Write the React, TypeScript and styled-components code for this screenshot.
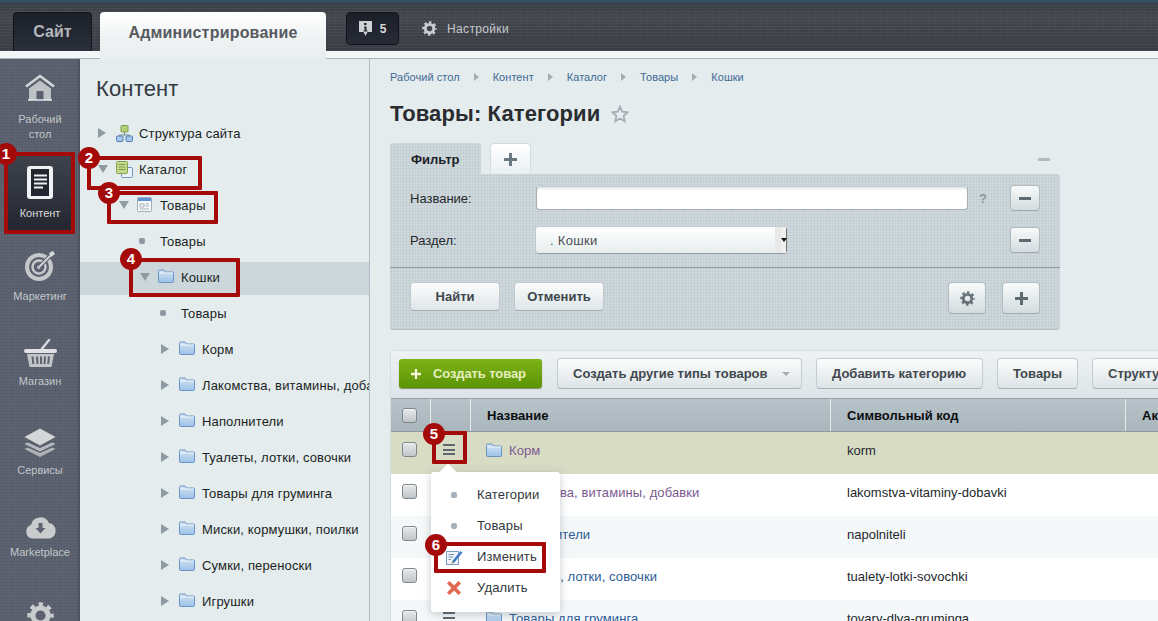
import React from "react";
import styled, { createGlobalStyle } from "styled-components";

const Global = createGlobalStyle`
  html, body { margin: 0; padding: 0; width: 1158px; height: 621px; overflow: hidden; background: #e4ecee; }
  #root { width: 1158px; height: 621px; }
  * { box-sizing: border-box; }
`;

const dots = (c: string) => `radial-gradient(${c} 0.8px, transparent 1.1px)`;

const Page = styled.div`
  position: relative;
  width: 1158px;
  height: 621px;
  overflow: hidden;
  display: flex;
  flex-direction: column;
  font-family: "Liberation Sans", Arial, sans-serif;
  background: #e4ecee;
`;
const TopBar = styled.header`
  height: 51px;
  flex: none;
  display: flex;
  align-items: flex-start;
  padding: 12px 0 0 13px;
  background-color: #40444c;
  background-image: repeating-linear-gradient(0deg, rgba(255, 255, 255, 0.05) 0 1px, transparent 1px 3px),
    repeating-linear-gradient(90deg, rgba(0, 0, 0, 0.07) 0 1px, transparent 1px 3px),
    linear-gradient(#3b3f46, #44484f 30%, #393d45);
  border-top: 3px solid #35505f;
  position: relative;
`;
const TopTabRow = styled.div`
  display: flex;
  margin-top: -3px;
  gap: 8px;
`;
const DarkTab = styled.div`
  width: 79px;
  height: 39px;
  border-radius: 4px 4px 0 0;
  background: linear-gradient(#1c2029, #2a2f3b);
  border: 1px solid #14161c;
  border-bottom: 0;
  color: #b3b6ba;
  font-size: 16px;
  font-weight: bold;
  display: flex;
  align-items: center;
  justify-content: center;
`;
const LightTab = styled.div`
  width: 226px;
  height: 47px;
  border-radius: 4px 4px 0 0;
  background: linear-gradient(#ffffff, #eef2f3 60%, #e8edef);
  color: #565a5f;
  font-size: 16px;
  font-weight: bold;
  letter-spacing: 0.2px;
  padding-top: 12px;
  text-align: center;
  position: relative;
  z-index: 1;
`;
const Counter = styled.div`
  margin: -3px 0 0 20px;
  width: 53px;
  height: 33px;
  border-radius: 4px;
  background: linear-gradient(#1b1f28, #262b36);
  border: 1px solid #14161c;
  display: flex;
  align-items: center;
  justify-content: center;
  gap: 8px;
  color: #d9dbdd;
  font-size: 12px;
  font-weight: bold;
`;
const SettingsLink = styled.div`
  margin: -3px 0 0 23px;
  height: 33px;
  display: flex;
  align-items: center;
  gap: 10px;
  color: #c6c9cd;
  font-size: 12px;
  letter-spacing: 0.35px;
`;
const Strip = styled.div`
  height: 8px;
  flex: none;
  background: #f3f6f7;
  border-bottom: 1px solid #a9b2b6;
`;
const Body = styled.div`
  flex: 1;
  display: flex;
  min-height: 0;
`;
const Sidebar = styled.nav`
  width: 80px;
  flex: none;
  background-color: #5d6370;
  background-image: ${dots("#525864")};
  background-size: 3px 3px;
  display: flex;
  flex-direction: column;
  align-items: center;
  box-shadow: inset -3px 0 3px -2px #474c57;
  padding-top: 15px;
`;
const SideItem = styled.div<{ $h: number; $active?: boolean; $after?: number }>`
  width: 64px;
  height: ${(p) => p.$h}px;
  flex: none;
  margin-bottom: ${(p) => p.$after ?? 0}px;
  display: flex;
  flex-direction: column;
  align-items: center;
  color: ${(p) => (p.$active ? "#d9dcdf" : "#c3c7cc")};
  font-size: 11px;
  line-height: 15px;
  text-align: center;
  padding-top: ${(p) => (p.$active ? 11 : 0)}px;
  background: ${(p) => (p.$active ? "linear-gradient(#3e434b, #23262e)" : "none")};
  border-radius: ${(p) => (p.$active ? 2 : 0)}px;
  white-space: nowrap;
`;
const SideLabel = styled.span<{ $t: number }>`
  margin-top: ${(p) => p.$t}px;
`;
const TreePanel = styled.aside`
  width: 290px;
  flex: none;
  border-right: 1px solid #aebcc6;
  background: #e4ecee;
  padding-top: 18px;
  overflow: hidden;
`;
const TreeTitle = styled.h2`
  margin: 0 0 14px 16px;
  font-size: 22px;
  line-height: 24px;
  font-weight: normal;
  color: #333a42;
  letter-spacing: 0.15px;
`;
const TreeRow = styled.div<{ $indent: number; $sel?: boolean }>`
  height: ${(p) => (p.$sel ? 33 : 36)}px;
  margin-top: ${(p) => (p.$sel ? 3 : 0)}px;
  padding-bottom: ${(p) => (p.$sel ? 3 : 0)}px;
  padding-left: ${(p) => p.$indent}px;
  display: flex;
  align-items: center;
  gap: 0;
  white-space: nowrap;
  color: #1b1f22;
  font-size: 13px;
  letter-spacing: 0.15px;
  background: ${(p) => (p.$sel ? "#ccd7dc" : "none")};
`;
const Toggle = styled.span<{ $open?: boolean }>`
  width: 0;
  height: 0;
  flex: none;
  margin-right: 8px;
  ${(p) =>
    p.$open
      ? `border-left: 5px solid transparent; border-right: 5px solid transparent; border-top: 8px solid #8e9ba2; margin-right: 8px;`
      : `border-top: 5px solid transparent; border-bottom: 5px solid transparent; border-left: 8px solid #8e9ba2; margin-right: 10px;`}
`;
const Bullet = styled.span`
  width: 6px;
  height: 6px;
  border-radius: 2px;
  background: #8e99a2;
  flex: none;
  margin-right: 15px;
`;
const TreeIcon = styled.span`
  width: 17px;
  height: 17px;
  flex: none;
  margin-right: 6px;
  display: flex;
`;
const Main = styled.main`
  flex: 1;
  min-width: 0;
  padding: 11px 0 0 20px;
  overflow: hidden;
`;
const Crumbs = styled.div`
  display: flex;
  align-items: center;
  height: 14px;
  font-size: 11px;
  letter-spacing: 0.05px;
  color: #3f6a94;
`;
const CrumbArrow = styled.span`
  width: 0;
  height: 0;
  margin: 0 14px;
  border-top: 4px solid transparent;
  border-bottom: 4px solid transparent;
  border-left: 5px solid #a4adb3;
`;
const TitleRow = styled.div`
  display: flex;
  align-items: center;
  gap: 11px;
  margin-top: 16px;
  height: 28px;
`;
const Title = styled.h1`
  margin: 0;
  font-size: 22px;
  font-weight: bold;
  letter-spacing: 0.12px;
  color: #2a2d30;
`;
const FilterTabs = styled.div`
  position: relative;
  display: flex;
  align-items: flex-end;
  gap: 9px;
  margin-top: 15px;
  width: 670px;
  height: 31px;
`;
const FilterTab = styled.div`
  width: 91px;
  height: 31px;
  border-radius: 4px 4px 0 0;
  background-color: #ced8dc;
  background-image: ${dots("#bdc8cd")};
  background-size: 3px 3px;
  font-size: 13px;
  font-weight: bold;
  color: #1d2124;
  padding: 9px 0 0 21px;
`;
const PlusTab = styled.div`
  width: 41px;
  height: 31px;
  border-radius: 4px 4px 0 0;
  background: linear-gradient(#fff, #eaf0f2);
  border: 1px solid #d3dcdf;
  border-bottom: 0;
  display: flex;
  align-items: center;
  justify-content: center;
`;
const Collapse = styled.span`
  position: absolute;
  right: 10px;
  top: 15px;
  width: 12px;
  height: 3px;
  background: #b1babf;
`;
const FilterBox = styled.section`
  width: 670px;
  height: 156px;
  border-radius: 0 3px 3px 3px;
  background-color: #ced8dc;
  background-image: ${dots("#bdc8cd")};
  background-size: 3px 3px;
  border-bottom: 1px solid #b6c0c4;
  display: flex;
  flex-direction: column;
`;
const FilterFields = styled.div`
  height: 94px;
  flex: none;
  border-bottom: 1px solid #8f9ba1;
  padding: 11px 20px 0;
  display: flex;
  flex-direction: column;
  gap: 16px;
`;
const FieldRow = styled.div`
  display: grid;
  grid-template-columns: 126px 432px 42px 30px;
  align-items: center;
  height: 26px;
  font-size: 13px;
  color: #24282b;
`;
const TextInput = styled.div`
  height: 24px;
  background: #fff;
  border: 1px solid #a3adb2;
  border-top-color: #c3cbce;
  border-radius: 3px;
  box-shadow: inset 0 2px 2px #e4e8ea;
`;
const SelectBox = styled.div`
  width: 251px;
  height: 26px;
  border-radius: 3px;
  background: linear-gradient(#fff, #e6ecee);
  box-shadow: 0 1px 1px #8f9ba1;
  display: flex;
  align-items: center;
  justify-content: space-between;
  padding-left: 14px;
  font-size: 13px;
  color: #4a4f54;
  letter-spacing: 0.3px;
  overflow: hidden;
`;
const SelectArrow = styled.span`
  width: 12px;
  height: 26px;
  background: #f0efed;
  display: flex;
  align-items: center;
  justify-content: center;
  border-left: 6px solid #e8e8e6;
  border-right: 1px solid #77797b;
  &::after {
    content: "";
    border-left: 3px solid transparent;
    border-right: 3px solid transparent;
    border-top: 4px solid #111;
  }
`;
const Hint = styled.span`
  color: #8b969c;
  font-size: 13px;
  font-weight: bold;
  padding-left: 11px;
`;
const IconBtn = styled.button<{ $w: number; $h: number }>`
  width: ${(p) => p.$w}px;
  height: ${(p) => p.$h}px;
  padding: 0;
  border: 1px solid #b0babf;
  border-bottom-color: #9fa9ae;
  border-radius: 4px;
  background: linear-gradient(#f8fafa, #d3dcdf);
  display: flex;
  align-items: center;
  justify-content: center;
`;
const Dash = styled.span`
  width: 12px;
  height: 3px;
  background: #5e6a72;
`;
const FilterFoot = styled.div`
  flex: 1;
  display: flex;
  align-items: flex-start;
  padding: 14px 20px 0;
`;
const TextBtn = styled.button<{ $w: number }>`
  width: ${(p) => p.$w}px;
  height: 29px;
  margin-right: 14px;
  padding: 0;
  border: 1px solid #c0c9cd;
  border-bottom-color: #a3adb2;
  border-radius: 4px;
  background: linear-gradient(#fafcfc, #dfe6e9);
  font: bold 13px "Liberation Sans", Arial, sans-serif;
  color: #3f464c;
`;
const FootRight = styled.div`
  margin-left: auto;
  display: flex;
  gap: 16px;
`;
const ListPanel = styled.section`
  position: relative;
  margin-top: 20px;
  width: 790px;
  border: 1px solid #d6dee1;
  border-bottom: 0;
  border-radius: 4px 0 0 0;
  background: #fff;
`;
const Toolbar = styled.div`
  height: 47px;
  display: flex;
  align-items: flex-start;
  padding: 8px 0 0 8px;
  background: linear-gradient(#eef2f4, #dde4e7);
  overflow: hidden;
`;
const GreenBtn = styled.button`
  width: 143px;
  height: 29px;
  flex: none;
  margin-right: 15px;
  padding: 0 0 0 12px;
  border: 0;
  border-radius: 3px;
  background: linear-gradient(#7eb218, #5c9405);
  box-shadow: 0 1px 1px #7c8a6a;
  display: flex;
  align-items: center;
  gap: 12px;
  color: #e6efbf;
  letter-spacing: -0.1px;
  font: bold 13px "Liberation Sans", Arial, sans-serif;
`;
const ToolBtn = styled.button<{ $w: number }>`
  width: ${(p) => p.$w}px;
  height: 31px;
  margin: -1px 14px 0 0;
  flex: none;
  padding: 0 0 0 15px;
  border: 1px solid #c3ccd0;
  border-bottom-color: #a9b3b8;
  border-radius: 4px;
  background: linear-gradient(#fbfcfc, #dde4e7);
  font: bold 13px "Liberation Sans", Arial, sans-serif;
  color: #41484e;
  display: flex;
  align-items: center;
  white-space: nowrap;
  overflow: hidden;
  text-align: left;
`;
const Caret = styled.span`
  margin-left: 14px;
  border-left: 4px solid transparent;
  border-right: 4px solid transparent;
  border-top: 4px solid #a4adb3;
`;
const Row = styled.div<{ $bg: string; $h: number }>`
  display: grid;
  grid-template-columns: 39px 40px 360px 295px 1fr;
  height: ${(p) => p.$h}px;
  background: ${(p) => p.$bg};
  font-size: 13px;
  color: #24282b;
`;
const HeadRow = styled(Row)`
  background: linear-gradient(#b7c3c9, #a9b6bc);
  border-top: 1px solid #98a4aa;
  border-bottom: 1px solid #8f9ba1;
  font-weight: bold;
  color: #0c0e10;
`;
const HeadCell = styled.div`
  border-left: 1px solid #e6ecee;
  padding-left: 16px;
  display: flex;
  align-items: center;
  font-size: 13px;
  white-space: nowrap;
`;
const CheckCell = styled.div<{ $top: number }>`
  padding: ${(p) => p.$top}px 0 0 11px;
`;
const Check = styled.span`
  display: block;
  width: 15px;
  height: 15px;
  border: 1px solid #7d878d;
  border-radius: 3px;
  background: linear-gradient(#e6e9ea, #bfc5c8);
  box-shadow: inset 0 1px 1px #f4f5f5;
`;
const MenuCell = styled.div`
  padding: 12px 0 0 13px;
`;
const Burger = styled.span`
  display: block;
  width: 12px;
  height: 11px;
  border-top: 2px solid #5d676d;
  border-bottom: 2px solid #5d676d;
  position: relative;
  &::after {
    content: "";
    position: absolute;
    left: 0;
    right: 0;
    top: 2.5px;
    height: 2px;
    background: #5d676d;
  }
`;
const NameCell = styled.div`
  padding: 11px 0 0 16px;
  display: flex;
  align-items: flex-start;
  gap: 7px;
`;
const RowLink = styled.span<{ $visited?: boolean }>`
  color: ${(p) => (p.$visited ? "#7c5a8f" : "#2d5a96")};
  font-size: 13px;
  line-height: 15px;
  letter-spacing: 0.1px;
`;
const CodeCell = styled.div`
  padding: 11px 0 0 17px;
  font-size: 13px;
  line-height: 15px;
`;
const PopMenu = styled.div`
  position: absolute;
  left: 40px;
  top: 121px;
  width: 129px;
  height: 140px;
  background: #fff;
  border-radius: 3px;
  box-shadow: 0 2px 8px rgba(70, 80, 90, 0.3);
  padding-top: 7px;
  &::before {
    content: "";
    position: absolute;
    left: 11px;
    top: -6px;
    width: 12px;
    height: 12px;
    background: #fff;
    transform: rotate(45deg);
  }
`;
const PopItem = styled.div`
  position: relative;
  height: 31px;
  display: grid;
  grid-template-columns: 46px 1fr;
  align-items: center;
  font-size: 13px;
  letter-spacing: 0.15px;
  color: #33383c;
`;
const PopIcon = styled.span`
  display: flex;
  justify-content: center;
`;
const PopDot = styled.span`
  width: 6px;
  height: 6px;
  border-radius: 2px;
  background: #a6b0bb;
`;
const Mark = styled.div<{ $x: number; $y: number; $w: number; $h: number }>`
  position: absolute;
  left: ${(p) => p.$x}px;
  top: ${(p) => p.$y}px;
  width: ${(p) => p.$w}px;
  height: ${(p) => p.$h}px;
  border: 4px solid #a50a0a;
  border-radius: 1px;
  pointer-events: none;
`;
const Badge = styled.div<{ $x: number; $y: number }>`
  position: absolute;
  left: ${(p) => p.$x - 11}px;
  top: ${(p) => p.$y - 11}px;
  width: 22px;
  height: 22px;
  border-radius: 50%;
  background: #a50a0a;
  color: #fff;
  font: bold 15px/22px "Liberation Sans", Arial, sans-serif;
  text-align: center;
`;

const Gear = ({ size, color }: { size: number; color: string }) => (
  <svg width={size} height={size} viewBox="0 0 16 16">
    <circle cx="8" cy="8" r="4.5" fill="none" stroke={color} strokeWidth="3" />
    <circle cx="8" cy="8" r="6.6" fill="none" stroke={color} strokeWidth="2.4" strokeDasharray="2.6 2.58" strokeDashoffset="1.3" />
  </svg>
);
const PlusIcon = ({ color, size = 13, w = 3 }: { color: string; size?: number; w?: number }) => (
  <svg width={size} height={size} viewBox="0 0 13 13">
    <path d="M6.5 0V13M0 6.5H13" stroke={color} strokeWidth={w} fill="none" />
  </svg>
);
const Folder = () => (
  <svg width="16" height="14" viewBox="0 0 16 14">
    <defs>
      <linearGradient id="fg" x1="0" y1="0" x2="0" y2="1">
        <stop offset="0" stopColor="#d3e5f6" />
        <stop offset="1" stopColor="#9cc1e6" />
      </linearGradient>
    </defs>
    <path d="M.5 2.5A1 1 0 0 1 1.5 1H6L7.5 3H14.5A1 1 0 0 1 15.5 4V12.5A1 1 0 0 1 14.5 13.5H1.5A1 1 0 0 1 .5 12.5Z" fill="url(#fg)" stroke="#6a93c3" />
    <path d="M1 4H15" stroke="#eef6fc" />
  </svg>
);
const StructIcon = () => (
  <svg width="17" height="17" viewBox="0 0 17 17">
    <path d="M8.5 7V10M3.5 12V10H13.5V12" stroke="#6f8a9c" fill="none" />
    <rect x="5" y=".5" width="7" height="6.5" rx="1" fill="#b3d07a" stroke="#7e9c4c" />
    <rect x=".5" y="11" width="6.5" height="5.5" rx="1" fill="#a9c8ea" stroke="#4f7fb8" />
    <rect x="10" y="11" width="6.5" height="5.5" rx="1" fill="#a9c8ea" stroke="#4f7fb8" />
  </svg>
);
const CatalogIcon = () => (
  <svg width="17" height="17" viewBox="0 0 17 17">
    <rect x="5.5" y="6.5" width="11" height="10" rx="1" fill="#eaf1f8" stroke="#6f93bd" />
    <rect x=".5" y=".5" width="11" height="12" rx="1" fill="#c4d98c" stroke="#84a050" />
    <path d="M2.5 3.5H9.5M2.5 6H9.5M2.5 8.5H9.5" stroke="#7f9a4b" />
  </svg>
);
const WindowIcon = () => (
  <svg width="15" height="15" viewBox="0 0 15 15">
    <rect x=".5" y=".5" width="14" height="14" rx="1" fill="#f4f6f8" stroke="#a3aeb8" />
    <rect x="1" y="1" width="13" height="3" fill="#5f92d6" />
    <path d="M3 7H7V10H3ZM8.5 7H12M8.5 9H12M3 12H12" stroke="#a9b3bc" fill="none" />
  </svg>
);
const House = () => (
  <svg width="30" height="27" viewBox="0 0 30 27">
    <path d="M1 12.5L15 2L29 12.5" fill="none" stroke="#d6d8da" strokeWidth="2.5" />
    <path d="M4 14.5L15 6.5L26 14.5V26H18.5V17H11.5V26H4Z" fill="#bfc2c5" />
    <path d="M3 26H27" stroke="#e6e7e8" strokeWidth="1.5" />
  </svg>
);
const DocIcon = () => (
  <svg width="26" height="33" viewBox="0 0 26 33">
    <rect width="26" height="33" rx="3" fill="#f0f2f3" />
    <rect x="4" y="3" width="18" height="27" fill="#23262e" />
    <path d="M7 9.5H20M7 13.5H20M7 17.5H20M7 21.5H16" stroke="#eceeef" strokeWidth="2" />
  </svg>
);
const Target = () => (
  <svg width="30" height="30" viewBox="0 0 30 30">
    <circle cx="14" cy="16" r="12" fill="none" stroke="#c6c8ca" strokeWidth="4" />
    <circle cx="14" cy="16" r="6.5" fill="none" stroke="#c6c8ca" strokeWidth="2.5" />
    <circle cx="14" cy="16" r="2" fill="#c6c8ca" />
    <path d="M14 16L27 3" stroke="#5d6370" strokeWidth="4" />
    <path d="M14 16L27 3" stroke="#d6d8da" strokeWidth="1.8" />
    <path d="M24 2L28 0L30 3L26 6Z" fill="#d6d8da" />
  </svg>
);
const Basket = () => (
  <svg width="33" height="29" viewBox="0 0 33 29">
    <path d="M17 11L25 1" stroke="#d6d8da" strokeWidth="2.5" strokeLinecap="round" />
    <rect x="0" y="10" width="33" height="4" rx="2" fill="#e0e2e3" />
    <path d="M3 15H30L27.5 28H5.5Z" fill="#c2c5c7" />
    <path d="M8.5 17.5L9.3 25M13 17.5L13.5 25M17 17.5V25M21 17.5L20.5 25M25 17.5L24.2 25" stroke="#5d6370" strokeWidth="2" />
  </svg>
);
const Layers = () => (
  <svg width="32" height="30" viewBox="0 0 32 30">
    <path d="M16 20L3.5 14.5L0.5 16L16 23.5L31.5 16L28.5 14.5Z" fill="#b8bbbe" />
    <path d="M16 25L3.5 19.5L0.5 21L16 29L31.5 21L28.5 19.5Z" fill="#b0b3b6" />
    <path d="M16 0.5L0.5 9L16 17.5L31.5 9Z" fill="#d4d6d8" />
  </svg>
);
const Cloud = () => (
  <svg width="33" height="24" viewBox="0 0 33 24">
    <path d="M8 23.5A7 7 0 0 1 7 10A9.5 9.5 0 0 1 25 8A8 8 0 0 1 26 23.5Z" fill="#c9cbcd" />
    <path d="M14.5 8H18.5V13H21.5L16.5 18.5L11.5 13H14.5Z" fill="#5d6370" />
  </svg>
);
const Info = () => (
  <svg width="13" height="15" viewBox="0 0 13 15">
    <path d="M0 0H13V11H8.5L6.5 15L4.5 11H0Z" fill="#cfd2d5" />
    <path d="M5 2H7.5V4H5ZM5 5.5H7.5V9.5H8.5V10.5H4.5V9.5H5.5V6.5H5Z" fill="#23272f" />
  </svg>
);
const Star = () => (
  <svg width="18" height="18" viewBox="0 0 18 18">
    <path d="M9 1.8L11.2 6.7L16.5 7.3L12.6 10.9L13.7 16.2L9 13.5L4.3 16.2L5.4 10.9L1.5 7.3L6.8 6.7Z" fill="#e9eef0" stroke="#a4afb6" strokeWidth="1.8" />
  </svg>
);
const EditIcon = () => (
  <svg width="17" height="16" viewBox="0 0 17 16">
    <rect x=".5" y="2.5" width="12" height="13" fill="#f1f5fa" stroke="#7a9cc4" />
    <path d="M2.5 5.5H8M2.5 8H7M2.5 10.5H5" stroke="#6f8fb5" />
    <path d="M6 12.5L14.5 2L16.5 3.5L8 14L5.5 14.5Z" fill="#3f78c4" />
    <path d="M5.5 14.5L6 12.5L8 14Z" fill="#e8c35c" />
  </svg>
);
const DeleteIcon = () => (
  <svg width="14" height="14" viewBox="0 0 14 14">
    <path d="M2.5 2.5L11.5 11.5M11.5 2.5L2.5 11.5" stroke="#e0694f" strokeWidth="3.6" strokeLinecap="square" />
  </svg>
);

const folders = ["Корм", "Лакомства, витамины, добавки", "Наполнители", "Туалеты, лотки, совочки", "Товары для груминга", "Миски, кормушки, поилки", "Сумки, переноски", "Игрушки"];
const rows = [
  { name: "Корм", code: "korm", bg: "#d9dcc4", visited: true },
  { name: "Лакомства, витамины, добавки", code: "lakomstva-vitaminy-dobavki", bg: "#ffffff", visited: true },
  { name: "Наполнители", code: "napolniteli", bg: "#f5f8f9" },
  { name: "Туалеты, лотки, совочки", code: "tualety-lotki-sovochki", bg: "#ffffff" },
  { name: "Товары для груминга", code: "tovary-dlya-gruminga", bg: "#f5f8f9" },
];
const marks = [
  { x: 4, y: 152, w: 71, h: 82 },
  { x: 87, y: 156, w: 115, h: 34 },
  { x: 107, y: 191, w: 111, h: 33 },
  { x: 129, y: 258, w: 111, h: 39 },
  { x: 432, y: 431, w: 35, h: 33 },
  { x: 434, y: 542, w: 112, h: 31 },
];
const badges = [
  { n: 1, x: 6, y: 154 },
  { n: 2, x: 89, y: 158 },
  { n: 3, x: 109, y: 193 },
  { n: 4, x: 131, y: 259 },
  { n: 5, x: 434, y: 434 },
  { n: 6, x: 436, y: 545 },
];

export default function App() {
  return (
    <Page>
      <Global />
      <TopBar>
        <TopTabRow>
          <DarkTab>Сайт</DarkTab>
          <LightTab>Администрирование</LightTab>
        </TopTabRow>
        <Counter>
          <Info />
          <span>5</span>
        </Counter>
        <SettingsLink>
          <Gear size={15} color="#c9ccd0" />
          <span>Настройки</span>
        </SettingsLink>
      </TopBar>
      <Strip />
      <Body>
        <Sidebar>
          <SideItem $h={81}>
            <House />
            <SideLabel $t={11}>
              Рабочий
              <br />
              стол
            </SideLabel>
          </SideItem>
          <SideItem $h={77} $active $after={19}>
            <DocIcon />
            <SideLabel $t={7}>Контент</SideLabel>
          </SideItem>
          <SideItem $h={88}>
            <Target />
            <SideLabel $t={8}>Маркетинг</SideLabel>
          </SideItem>
          <SideItem $h={89}>
            <Basket />
            <SideLabel $t={6}>Магазин</SideLabel>
          </SideItem>
          <SideItem $h={87}>
            <Layers />
            <SideLabel $t={5}>Сервисы</SideLabel>
          </SideItem>
          <SideItem $h={87}>
            <Cloud />
            <SideLabel $t={6}>Marketplace</SideLabel>
          </SideItem>
          <SideItem $h={40}>
            <Gear size={27} color="#c9cbcd" />
          </SideItem>
        </Sidebar>
        <TreePanel>
          <TreeTitle>Контент</TreeTitle>
          <TreeRow $indent={18}>
            <Toggle />
            <TreeIcon><StructIcon /></TreeIcon>
            Структура сайта
          </TreeRow>
          <TreeRow $indent={18}>
            <Toggle $open />
            <TreeIcon><CatalogIcon /></TreeIcon>
            Каталог
          </TreeRow>
          <TreeRow $indent={39}>
            <Toggle $open />
            <TreeIcon><WindowIcon /></TreeIcon>
            Товары
          </TreeRow>
          <TreeRow $indent={59}>
            <Bullet />
            Товары
          </TreeRow>
          <TreeRow $indent={60} $sel>
            <Toggle $open />
            <TreeIcon><Folder /></TreeIcon>
            Кошки
          </TreeRow>
          <TreeRow $indent={80}>
            <Bullet />
            Товары
          </TreeRow>
          {folders.map((f) => (
            <TreeRow $indent={81} key={f}>
              <Toggle />
              <TreeIcon><Folder /></TreeIcon>
              {f}
            </TreeRow>
          ))}
        </TreePanel>
        <Main>
          <Crumbs>
            Рабочий стол<CrumbArrow />Контент<CrumbArrow />Каталог<CrumbArrow />Товары<CrumbArrow />Кошки
          </Crumbs>
          <TitleRow>
            <Title>Товары: Категории</Title>
            <Star />
          </TitleRow>
          <FilterTabs>
            <FilterTab>Фильтр</FilterTab>
            <PlusTab>
              <PlusIcon color="#6c7880" />
            </PlusTab>
            <Collapse />
          </FilterTabs>
          <FilterBox>
            <FilterFields>
              <FieldRow>
                <span>Название:</span>
                <TextInput />
                <Hint>?</Hint>
                <IconBtn $w={30} $h={26}><Dash /></IconBtn>
              </FieldRow>
              <FieldRow>
                <span>Раздел:</span>
                <SelectBox>
                  <span>. Кошки</span>
                  <SelectArrow />
                </SelectBox>
                <span />
                <IconBtn $w={30} $h={26}><Dash /></IconBtn>
              </FieldRow>
            </FilterFields>
            <FilterFoot>
              <TextBtn $w={90}>Найти</TextBtn>
              <TextBtn $w={90}>Отменить</TextBtn>
              <FootRight>
                <IconBtn $w={38} $h={32}><Gear size={15} color="#68737a" /></IconBtn>
                <IconBtn $w={38} $h={32}><PlusIcon color="#5e6a72" /></IconBtn>
              </FootRight>
            </FilterFoot>
          </FilterBox>
          <ListPanel>
            <Toolbar>
              <GreenBtn>
                <PlusIcon color="#f3f7dc" size={10} />
                Создать товар
              </GreenBtn>
              <ToolBtn $w={245}>
                Создать другие типы товаров
                <Caret />
              </ToolBtn>
              <ToolBtn $w={167}>Добавить категорию</ToolBtn>
              <ToolBtn $w={81}>Товары</ToolBtn>
              <ToolBtn $w={120}>Структура</ToolBtn>
            </Toolbar>
            <HeadRow as="div" $bg="" $h={34}>
              <CheckCell $top={9}><Check /></CheckCell>
              <HeadCell />
              <HeadCell>Название</HeadCell>
              <HeadCell>Символьный код</HeadCell>
              <HeadCell>Активность</HeadCell>
            </HeadRow>
            {rows.map((r) => (
              <Row $bg={r.bg} $h={42} key={r.code}>
                <CheckCell $top={10}><Check /></CheckCell>
                <MenuCell><Burger /></MenuCell>
                <NameCell>
                  <Folder />
                  <RowLink $visited={r.visited}>{r.name}</RowLink>
                </NameCell>
                <CodeCell>{r.code}</CodeCell>
                <div />
              </Row>
            ))}
            <PopMenu>
              <PopItem><PopIcon><PopDot /></PopIcon>Категории</PopItem>
              <PopItem><PopIcon><PopDot /></PopIcon>Товары</PopItem>
              <PopItem><PopIcon><EditIcon /></PopIcon>Изменить</PopItem>
              <PopItem><PopIcon><DeleteIcon /></PopIcon>Удалить</PopItem>
            </PopMenu>
          </ListPanel>
        </Main>
      </Body>
      {marks.map((m) => (
        <Mark key={`${m.x}-${m.y}`} $x={m.x} $y={m.y} $w={m.w} $h={m.h} />
      ))}
      {badges.map((b) => (
        <Badge key={b.n} $x={b.x} $y={b.y}>{b.n}</Badge>
      ))}
    </Page>
  );
}
